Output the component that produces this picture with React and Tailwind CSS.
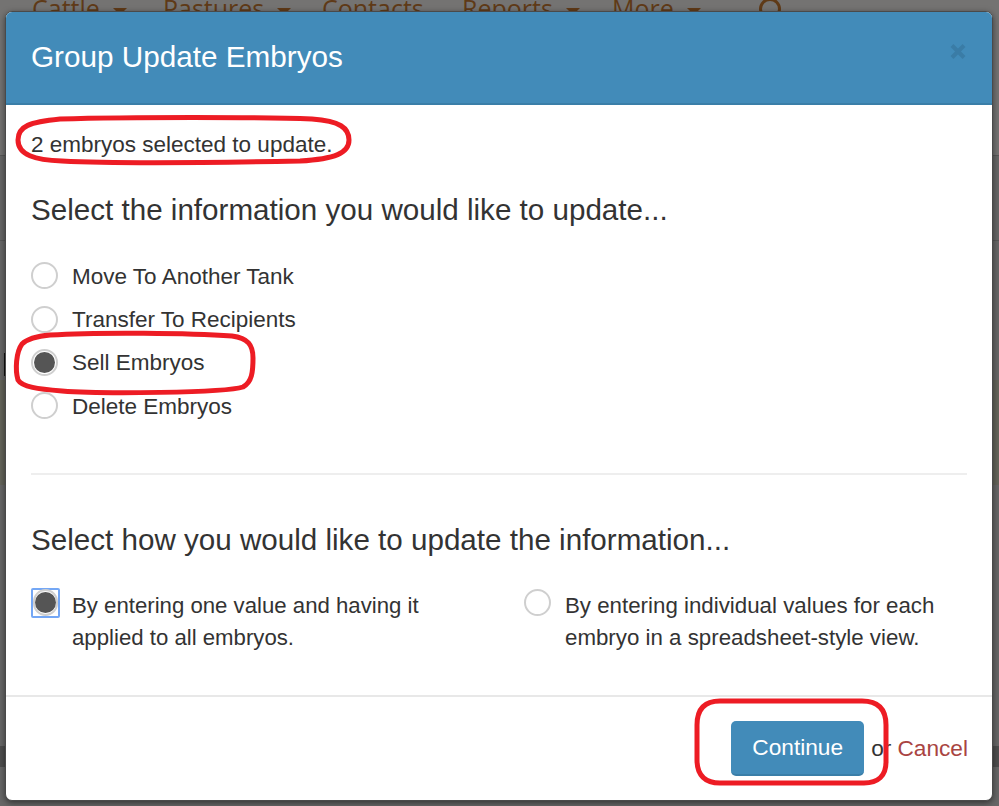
import React from "react";

function Radio({ checked, focused, className = "" }) {
  const ring = (
    <span className="flex h-[27px] w-[27px] items-center justify-center rounded-full border-2 border-[#cfcfcf] bg-white">
      {checked && <span className="block h-[21px] w-[21px] rounded-full bg-[#555555]" />}
    </span>
  );
  if (focused) {
    return (
      <span className={`flex h-[30px] w-[29px] shrink-0 items-center justify-center rounded-[2px] border-2 border-[#74a7f5] ${className}`}>
        {ring}
      </span>
    );
  }
  return <span className={`flex h-[29px] w-[29px] shrink-0 items-center justify-center ${className}`}>{ring}</span>;
}

function Option({ label, checked }) {
  return (
    <div className="flex h-[43.4px] items-center gap-[13px]">
      <Radio checked={checked} className="-ml-[1px] -mt-[2px]" />
      <span>{label}</span>
    </div>
  );
}

function NavItem({ label, width, caret = true }) {
  return (
    <span className="flex items-center gap-[13px]" style={{ width }}>
      <span>{label}</span>
      {caret && <span className="mt-[5px] h-0 w-0 border-x-[7px] border-t-[7px] border-x-transparent border-t-[#5f3a17]" />}
    </span>
  );
}

function Backdrop() {
  return (
    <div className="flex h-full flex-col">
      <div className="flex h-[155px] shrink-0 flex-col bg-[#747372]">
        <div className="mt-[-11px] flex h-[40px] items-center pl-[32px] font-['Open_Sans',sans-serif] text-[25px] text-[#5f3a17]">
          <NavItem label="Cattle" width={131} />
          <NavItem label="Pastures" width={159} />
          <NavItem label="Contacts" width={140} caret={false} />
          <NavItem label="Reports" width={150} />
          <NavItem label="More" width={146} />
          <svg width="24" height="24" viewBox="0 0 24 24" className="mt-[2px]">
            <circle cx="12" cy="11" r="9.5" fill="none" stroke="#5f3a17" strokeWidth="3" />
          </svg>
        </div>
      </div>
      <div className="h-[86px] shrink-0 border-y border-y-[#585858] bg-[#676767]" />
      <div className="h-[139px] shrink-0 bg-[#676767]">
        <div className="ml-[4px] mt-[112px] h-[23px] w-[2px] bg-[#111111]" />
      </div>
      <div className="h-[105px] shrink-0 bg-[#64645a]" />
      <div className="h-[261px] shrink-0 bg-[#676767]" />
      <div className="h-[21px] shrink-0 bg-[#4e4e4e]" />
      <div className="flex-1 bg-[#676767]" />
    </div>
  );
}

export default function App() {
  return (
    <div className="relative h-[806px] w-[999px] overflow-hidden font-['Liberation_Sans',Arial,sans-serif] text-[#333333]">
      <Backdrop />

      <div className="absolute left-[5px] top-[11px] flex h-[790px] w-[988px] flex-col overflow-hidden rounded-[7px] border border-[#4a4a4a] bg-white shadow-[0_2px_6px_rgba(0,0,0,0.5)]">
        <header className="flex h-[93px] shrink-0 items-center justify-between border-b-2 border-[#3a7ea8] bg-[#428bb9] pl-[25px] pr-[26px]">
          <h1 className="mb-[2px] text-[29.7px] font-normal leading-none text-white">Group Update Embryos</h1>
          <svg width="16" height="17" viewBox="0 0 16 17" className="mb-[13px]">
            <path d="M2 2.5 L14 14.5 M14 2.5 L2 14.5" stroke="#3a7ca6" strokeWidth="4" />
          </svg>
        </header>

        <main className="flex flex-col px-[25px] text-[22.5px] leading-[32px]">
          <p className="mt-[24px]">2 embryos selected to update.</p>
          <h2 className="mt-[32px] text-[29.6px] font-normal leading-[34px]">Select the information you would like to update...</h2>
          <div className="mt-[28px] flex flex-col">
            <Option label="Move To Another Tank" />
            <Option label="Transfer To Recipients" />
            <Option label="Sell Embryos" checked />
            <Option label="Delete Embryos" />
          </div>
          <hr className="mt-[44px] border-t-2 border-[#eeeeee]" />
          <h2 className="mt-[48px] text-[29.6px] font-normal leading-[34px]">Select how you would like to update the information...</h2>
          <div className="mt-[33px] flex">
            <div className="flex w-[493px] gap-[12px]">
              <Radio checked focused className="-mt-[2px]" />
              <p className="w-[370px] text-[22.2px]">By entering one value and having it applied to all embryos.</p>
            </div>
            <div className="flex flex-1 gap-[13px]">
              <Radio className="-ml-[1px] -mt-[2px]" />
              <p className="w-[390px] text-[22.3px]">By entering individual values for each embryo in a spreadsheet-style view.</p>
            </div>
          </div>
        </main>

        <footer className="mt-[41px] flex flex-1 items-center justify-end gap-[6px] border-t-2 border-[#e8e8e8] pr-[24px] text-[22.7px]">
          <button className="mr-[1px] h-[55px] w-[133px] rounded-[5px] border-b-2 border-[#3a7ea8] bg-[#428bb9] text-white">Continue</button>
          <span>or</span>
          <a className="text-[#a94442]">Cancel</a>
        </footer>
      </div>

      <svg className="pointer-events-none absolute inset-0" width="999" height="806" viewBox="0 0 999 806" fill="none" stroke="#ed1c24" strokeWidth="5">
        <path d="M60 119 C130 117 260 117 312 119 C340 121 349 128 349 140 C349 153 335 159 300 161 C200 163 100 163 62 161 C35 160 18 155 18 140 C18 126 30 122 60 119 Z" />
        <path d="M50 335 C100 332 190 333 232 336 C248 338 253 345 253 358 C253 372 252 382 243 387 C225 393 100 394 62 391 C38 389 22 387 18 380 C15 370 16 352 22 344 C28 338 38 336 50 335 Z" />
        <path d="M720 701 L862 701 C878 701 886 709 886 725 L886 762 C886 776 878 783 864 783 L720 783 C705 783 697 775 697 760 L697 725 C697 709 705 701 720 701 Z" />
      </svg>
    </div>
  );
}
